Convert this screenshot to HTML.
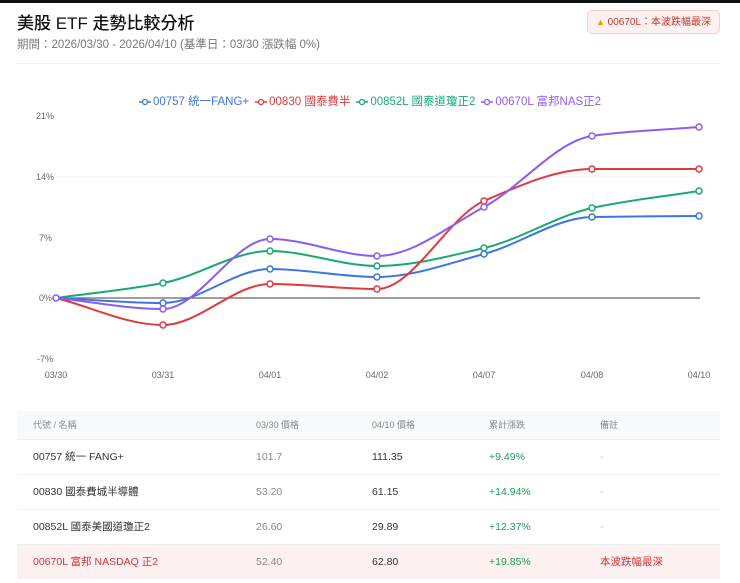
<!DOCTYPE html>
<html><head><meta charset="utf-8"><style>
*{margin:0;padding:0;box-sizing:border-box}
body{width:740px;height:583px;background:#fff;font-family:"Liberation Sans","Noto Sans CJK TC",sans-serif;position:relative;overflow:hidden;color:#222}
.topbar{position:absolute;left:0;top:0;width:740px;height:3px;background:#111}
h1{position:absolute;left:17px;top:9px;font-size:17px;font-weight:500;color:#111}
.sub{position:absolute;left:17px;top:36px;font-size:11.5px;color:#777}
.badge{position:absolute;left:587px;top:10px;width:133px;height:24px;border:1px solid #f5cfd2;background:#fdf0f1;border-radius:5px;font-size:10px;color:#c0392b;line-height:22px;text-align:center;white-space:nowrap}
.badge b{color:#e6a100;font-size:9px;font-weight:normal}
.hr{position:absolute;left:17px;top:63px;width:703px;height:1px;background:#eee}
.legend{position:absolute;top:93px;left:0;width:740px;text-align:center;font-size:11.5px}
.legend span{margin:0 3px;white-space:nowrap}
.legend svg{vertical-align:middle;margin-right:2px}
table{position:absolute;left:17px;top:411px;width:703px;border-collapse:collapse;font-size:10.5px}
th{font-weight:normal;color:#888;font-size:9px;text-align:left;height:28px;background:#f8f9fb}
td{height:35px;border-top:1px solid #eee;color:#333}
td:first-child,th:first-child{padding-left:16px}
.g{color:#1f9d55}.m{color:#888}.d{color:#bbb}
tr.hl td{background:#fdf0f0}
</style></head><body>
<div class="topbar"></div>
<h1>美股 ETF 走勢比較分析</h1>
<div class="sub">期間：2026/03/30 - 2026/04/10 (基準日：03/30 漲跌幅 0%)</div>
<div class="badge"><b>▲</b> 00670L：本波跌幅最深</div>
<div class="hr"></div>
<div class="legend"><span style="color:#3b76e1"><svg width="12" height="8"><line x1="0" y1="4" x2="12" y2="4" stroke="#3b76e1" stroke-width="1.5"/><circle cx="6" cy="4" r="2.5" fill="#fff" stroke="#3b76e1" stroke-width="1.3"/></svg>00757 統一FANG+</span><span style="color:#e0393e"><svg width="12" height="8"><line x1="0" y1="4" x2="12" y2="4" stroke="#e0393e" stroke-width="1.5"/><circle cx="6" cy="4" r="2.5" fill="#fff" stroke="#e0393e" stroke-width="1.3"/></svg>00830 國泰費半</span><span style="color:#1aa874"><svg width="12" height="8"><line x1="0" y1="4" x2="12" y2="4" stroke="#1aa874" stroke-width="1.5"/><circle cx="6" cy="4" r="2.5" fill="#fff" stroke="#1aa874" stroke-width="1.3"/></svg>00852L 國泰道瓊正2</span><span style="color:#8b5cf6"><svg width="12" height="8"><line x1="0" y1="4" x2="12" y2="4" stroke="#8b5cf6" stroke-width="1.5"/><circle cx="6" cy="4" r="2.5" fill="#fff" stroke="#8b5cf6" stroke-width="1.3"/></svg>00670L 富邦NAS正2</span></div>
<svg style="position:absolute;left:0;top:0" width="740" height="400" font-family="Liberation Sans" font-size="9" fill="#666">
<text x="36" y="119">21%</text><text x="36" y="180">14%</text><text x="39" y="241">7%</text><text x="39" y="301">0%</text><text x="37" y="362">-7%</text>
<line x1="56" y1="177" x2="700" y2="177" stroke="#f4f4f4"/>
<line x1="56" y1="298" x2="700" y2="298" stroke="#666" stroke-width="1.2"/>
<g text-anchor="middle"><text x="56" y="378">03/30</text><text x="163" y="378">03/31</text><text x="270" y="378">04/01</text><text x="377" y="378">04/02</text><text x="484" y="378">04/07</text><text x="592" y="378">04/08</text><text x="699" y="378">04/10</text></g>
<g fill="none" stroke-width="2">
<path stroke="#1aa874" d="M56,298 C92,293 127,289.8 163,283 C199,276.2 234,251 270,251 C306,251 341,266 377,266 C413,266 448,256.3 484,248 C520,239.7 556,216 592,208 C628,200 663,196.7 699,191"/>
<path stroke="#3b76e1" d="M56,298 C92,299.7 127,303 163,303 C199,303 234,269 270,269 C306,269 341,277 377,277 C413,277 448,263.5 484,254 C520,244.5 556,217.6 592,217 C628,216.4 663,216.3 699,216"/>
<path stroke="#e0393e" d="M56,298 C92,307 127,325 163,325 C199,325 234,284 270,284 C306,284 341,289 377,289 C413,289 448,216.6 484,201 C520,185.4 556,169 592,169 C628,169 663,169 699,169"/>
<path stroke="#8b5cf6" d="M56,298 C92,301.7 127,309 163,309 C199,309 234,239 270,239 C306,239 341,256 377,256 C413,256 448,226.3 484,207 C520,187.7 556,141.3 592,136 C628,130.7 663,130 699,127"/>
</g>
<g fill="#fff" stroke-width="1.5">
<g stroke="#1aa874"><circle cx="163" cy="283" r="3"/><circle cx="270" cy="251" r="3"/><circle cx="377" cy="266" r="3"/><circle cx="484" cy="248" r="3"/><circle cx="592" cy="208" r="3"/><circle cx="699" cy="191" r="3"/></g>
<g stroke="#3b76e1"><circle cx="163" cy="303" r="3"/><circle cx="270" cy="269" r="3"/><circle cx="377" cy="277" r="3"/><circle cx="484" cy="254" r="3"/><circle cx="592" cy="217" r="3"/><circle cx="699" cy="216" r="3"/></g>
<g stroke="#e0393e"><circle cx="163" cy="325" r="3"/><circle cx="270" cy="284" r="3"/><circle cx="377" cy="289" r="3"/><circle cx="484" cy="201" r="3"/><circle cx="592" cy="169" r="3"/><circle cx="699" cy="169" r="3"/></g>
<g stroke="#8b5cf6"><circle cx="56" cy="298" r="3"/><circle cx="163" cy="309" r="3"/><circle cx="270" cy="239" r="3"/><circle cx="377" cy="256" r="3"/><circle cx="484" cy="207" r="3"/><circle cx="592" cy="136" r="3"/><circle cx="699" cy="127" r="3"/></g>
</g>
</svg>
<table>
<colgroup><col style="width:239px"><col style="width:116px"><col style="width:117px"><col style="width:111px"><col></colgroup>
<tr><th>代號 / 名稱</th><th>03/30 價格</th><th>04/10 價格</th><th>累計漲跌</th><th>備註</th></tr>
<tr><td>00757 統一 FANG+</td><td class="m">101.7</td><td>111.35</td><td class="g">+9.49%</td><td class="d">-</td></tr>
<tr><td>00830 國泰費城半導體</td><td class="m">53.20</td><td>61.15</td><td class="g">+14.94%</td><td class="d">-</td></tr>
<tr><td>00852L 國泰美國道瓊正2</td><td class="m">26.60</td><td>29.89</td><td class="g">+12.37%</td><td class="d">-</td></tr>
<tr class="hl"><td style="color:#d0363c">00670L 富邦 NASDAQ 正2</td><td class="m">52.40</td><td>62.80</td><td class="g">+19.85%</td><td style="color:#d0363c">本波跌幅最深</td></tr>
</table>
</body></html>
